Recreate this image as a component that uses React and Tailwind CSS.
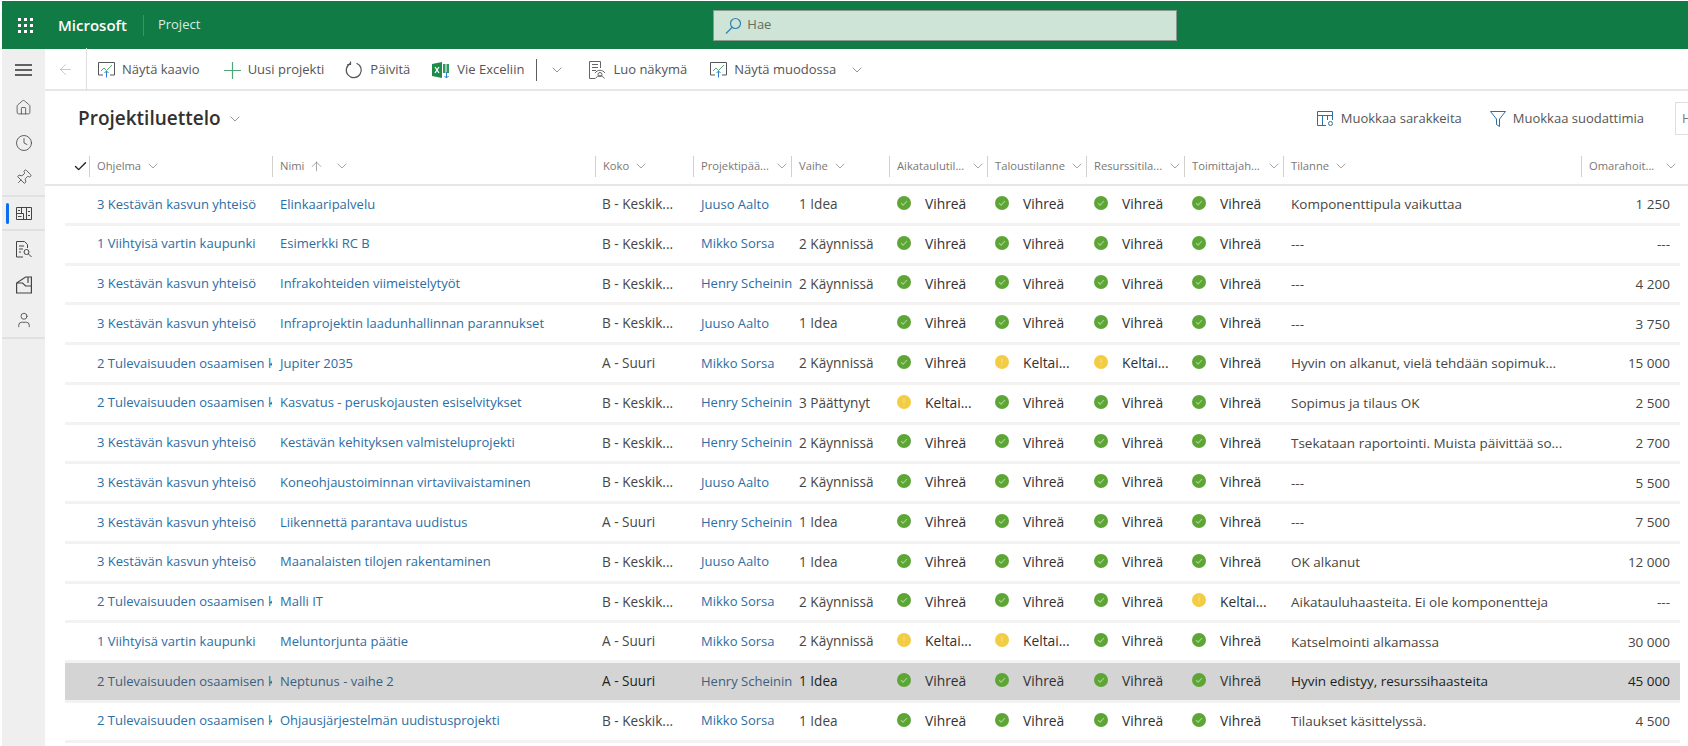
import React from "react";
import { ArrowLeft, ArrowUp, Check, ChevronDown, Clock, Home, Pin, User } from "lucide-react";

const font = "font-['Open_Sans','Noto_Sans',sans-serif]";
const cols = "grid grid-cols-[24px_183px_323px_98px_98px_98px_98px_99px_98px_99px_298px_99px]";

const K3 = "3 Kestävän kasvun yhteisö";
const V1 = "1 Viihtyisä vartin kaupunki";
const T2 = "2 Tulevaisuuden osaamisen k";
const BK = "B - Keskik...";
const AS = "A - Suuri";

const rows = [
  [K3, "Elinkaaripalvelu", BK, "Juuso Aalto", "1 Idea", "GGGG", "Komponenttipula vaikuttaa", "1 250"],
  [V1, "Esimerkki RC B", BK, "Mikko Sorsa", "2 Käynnissä", "GGGG", "---", "---"],
  [K3, "Infrakohteiden viimeistelytyöt", BK, "Henry Scheinin", "2 Käynnissä", "GGGG", "---", "4 200"],
  [K3, "Infraprojektin laadunhallinnan parannukset", BK, "Juuso Aalto", "1 Idea", "GGGG", "---", "3 750"],
  [T2, "Jupiter 2035", AS, "Mikko Sorsa", "2 Käynnissä", "GYYG", "Hyvin on alkanut, vielä tehdään sopimuk...", "15 000"],
  [T2, "Kasvatus - peruskojausten esiselvitykset", BK, "Henry Scheinin", "3 Päättynyt", "YGGG", "Sopimus ja tilaus OK", "2 500"],
  [K3, "Kestävän kehityksen valmisteluprojekti", BK, "Henry Scheinin", "2 Käynnissä", "GGGG", "Tsekataan raportointi. Muista päivittää so...", "2 700"],
  [K3, "Koneohjaustoiminnan virtaviivaistaminen", BK, "Juuso Aalto", "2 Käynnissä", "GGGG", "---", "5 500"],
  [K3, "Liikennettä parantava uudistus", AS, "Henry Scheinin", "1 Idea", "GGGG", "---", "7 500"],
  [K3, "Maanalaisten tilojen rakentaminen", BK, "Juuso Aalto", "1 Idea", "GGGG", "OK alkanut", "12 000"],
  [T2, "Malli IT", BK, "Mikko Sorsa", "2 Käynnissä", "GGGY", "Aikatauluhaasteita. Ei ole komponentteja", "---"],
  [V1, "Meluntorjunta päätie", AS, "Mikko Sorsa", "2 Käynnissä", "YYGG", "Katselmointi alkamassa", "30 000"],
  [T2, "Neptunus - vaihe 2", AS, "Henry Scheinin", "1 Idea", "GGGG", "Hyvin edistyy, resurssihaasteita", "45 000"],
  [T2, "Ohjausjärjestelmän uudistusprojekti", BK, "Mikko Sorsa", "1 Idea", "GGGG", "Tilaukset käsittelyssä.", "4 500"],
];

// --- drawn icons ---
function Waffle() {
  const dots = [];
  for (let y = 0; y < 3; y++) for (let x = 0; x < 3; x++) dots.push(<rect key={x + "-" + y} x={x * 6} y={y * 6} width="3" height="3" />);
  return <svg width="15" height="15" viewBox="0 0 15 15" fill="#fff">{dots}</svg>;
}

function Hamburger() {
  return (
    <svg width="17" height="12" viewBox="0 0 17 12" stroke="#333" strokeWidth="1.300">
      <path d="M0 1h17M0 6h17M0 11h17" />
    </svg>
  );
}

function SearchIcon() {
  return (
    <svg width="17" height="17" viewBox="0 0 17 17" fill="none" stroke="#2f82b8" strokeWidth="1.200">
      <circle cx="10.500" cy="6.500" r="5" />
      <path d="M7 10.500L1 16.500" />
    </svg>
  );
}

function ChartIcon() {
  return (
    <svg width="17" height="16" viewBox="0 0 17 16" fill="none" strokeWidth="1">
      <path d="M5 13H.5V.500h16V13H12" stroke="#555" />
      <path d="M3 9l3-3 2.500 2.500L14 3" stroke="#55ab74" />
      <path d="M8.500 15.500V9M6.500 11l2-2 2 2" stroke="#2b7cd3" />
    </svg>
  );
}

function PlusIcon() {
  return (
    <svg width="17" height="17" viewBox="0 0 17 17" stroke="#4fa873" strokeWidth="1.200">
      <path d="M8.500 0v17M0 8.500h17" />
    </svg>
  );
}

function RefreshIcon() {
  return (
    <svg width="18" height="18" viewBox="0 0 18 18" fill="none" stroke="#555" strokeWidth="1.200">
      <path d="M11.500 2.200a7.500 7.500 0 1 1-6.300.4" />
      <path d="M5.500.500v3h-3.200" />
    </svg>
  );
}

function ExcelIcon() {
  return (
    <svg width="18" height="17" viewBox="0 0 18 17">
      <path d="M0 2l10-2v16L0 14z" fill="#1f8a4c" />
      <path d="M3 5l4 6M7 5l-4 6" stroke="#fff" strokeWidth="1.300" />
      <path d="M11 2h2.500v9H11zM14.500 2H17v9h-2.500z" fill="#2f9a5c" />
      <path d="M14.500 10v6M12.500 14l2 2 2-2" stroke="#2b7cd3" fill="none" />
    </svg>
  );
}

function ViewIcon() {
  return (
    <svg width="17" height="18" viewBox="0 0 17 18" fill="none" stroke="#666">
      <path d="M6 17.500H.5V.500h11V7M3 3.500h6M3 6.500h6M3 9.500h4" />
      <circle cx="11" cy="13.500" r="2" />
      <path d="M6.500 17.500a5 5 0 0 1 9 0M6 12a6 6 0 0 1 10 0" />
    </svg>
  );
}

function ColumnsIcon() {
  return (
    <svg width="17" height="16" viewBox="0 0 17 16" fill="none" stroke="#2f6ea5">
      <path d="M9 14.500H.5V.500h15V9M.5 4.500h15M5.500 4.500v10M10.500 4.500V9" />
      <circle cx="13.500" cy="12.500" r="2" />
    </svg>
  );
}

function FunnelIcon() {
  return (
    <svg width="16" height="16" viewBox="0 0 16 16" fill="none" stroke="#2f6ea5">
      <path d="M.5.500h15L9.500 8v7.500l-3-2V8z" />
    </svg>
  );
}

function ListIcon() {
  return (
    <svg width="16" height="13" viewBox="0 0 16 13" fill="none" stroke="#444">
      <path d="M.5.500h15v12H.500zM.5 6.500h7M5.500.500v6M10.500.500v12M7.500 6.500v6M2 3.500h2M2 9.500h3.500M12 4.500h2M12 8.500h2" />
    </svg>
  );
}

function ReportIcon() {
  return (
    <svg width="17" height="18" viewBox="0 0 17 18" fill="none" stroke="#444">
      <path d="M8 17H1.500V1.500h8l3 3V8M4 6h5M4 9h4M4 12h2" />
      <circle cx="11.500" cy="12" r="2.500" />
      <path d="M13.500 14l3 3" />
    </svg>
  );
}

function BookIcon() {
  return (
    <svg width="16" height="18" viewBox="0 0 16 18" fill="none" stroke="#444" strokeWidth="1.200">
      <path d="M.6 17V7l9-6h5.800v16zM.6 7h6l3 3h5.800M12 1v6" />
    </svg>
  );
}

function StatusDot({ kind }) {
  if (kind === "G") {
    return (
      <svg width="14" height="14" viewBox="0 0 14 14" className="shrink-0 -mt-[3px]">
        <circle cx="7" cy="7" r="7" fill="#5da636" />
        <path d="M4 7.200l2.100 2L10 5" fill="none" stroke="#a8d08f" strokeWidth="1.100" />
      </svg>
    );
  }
  return (
    <svg width="14" height="14" viewBox="0 0 14 14" className="shrink-0 -mt-[3px]">
      <circle cx="7" cy="7" r="7" fill="#f2cd43" />
      <path d="M7 3.500v4.500M7 9.500v1" stroke="#f8e08a" strokeWidth="1" />
    </svg>
  );
}

// --- bits of the page ---
function ToolButton({ icon, label, className }) {
  return (
    <div className={"flex items-center gap-[7px] " + className}>
      {icon}
      <span>{label}</span>
    </div>
  );
}

function HeaderCell({ label, sort, first }) {
  return (
    <div className="flex items-center h-[21px] border-l border-[#d2d0ce] pl-[7px] pr-[1px]">
      <span className="text-[11.2px] text-[#797775] whitespace-nowrap">{label}</span>
      {sort && <ArrowUp size={15} strokeWidth={1} className="text-[#797775] ml-[5px] mr-[6px]" />}
      <ChevronDown size={16} strokeWidth={1} className={"text-[#797775] " + (first ? "ml-1" : "ml-auto")} />
    </div>
  );
}

function StatusCell({ kind }) {
  return (
    <div className="flex items-center pl-2">
      <StatusDot kind={kind} />
      <span className="ml-[14px] text-[13.8px] text-[#323130]">{kind === "G" ? "Vihreä" : "Keltai..."}</span>
    </div>
  );
}

function Row({ row, selected }) {
  const link = selected ? "text-[#3b5f80]" : "text-[#2c6da3]";
  const plain = selected ? "text-[#201f1e]" : "text-[#484644]";
  return (
    <div className={cols + " h-[39.75px] items-stretch border-b-[3px] border-[#f3f2f1] text-[13px] " + (selected ? "bg-[#d4d4d4]" : "")}>
      <div />
      <div className={"flex items-center pl-2 overflow-hidden whitespace-nowrap " + link}>{row[0]}</div>
      <div className={"flex items-center pl-2 whitespace-nowrap " + link}>{row[1]}</div>
      <div className={"flex items-center pl-[7px] whitespace-nowrap text-[13.6px] " + plain}>{row[2]}</div>
      <div className={"flex items-center pl-2 whitespace-nowrap " + link}>{row[3]}</div>
      <div className={"flex items-center pl-2 whitespace-nowrap text-[13.6px] " + plain}>{row[4]}</div>
      {row[5].split("").map((kind, i) => <StatusCell key={i} kind={kind} />)}
      <div className={"flex items-center pl-2 whitespace-nowrap text-[13.5px] " + plain}>{row[6]}</div>
      <div className={"flex items-center justify-end pr-[10px] whitespace-nowrap text-[13.5px] " + plain}>{row[7]}</div>
    </div>
  );
}

export default function App() {
  return (
    <div className={"h-[746px] w-[1688px] overflow-hidden bg-white pl-[2px] pt-[1px] flex flex-col " + font}>
      {/* top bar */}
      <div className="h-[48px] shrink-0 bg-[#117b45] flex items-center text-white">
        <div className="w-[15px] ml-[16px] flex"><Waffle /></div>
        <span className="ml-[25px] text-[15px] font-semibold">Microsoft</span>
        <div className="ml-4 h-[21px] border-l border-[#3b9468]" />
        <span className="ml-[14px] text-[13px] text-[#d8ece1]">Project</span>
        <div className="ml-[513px] w-[464px] h-[31px] bg-[#cde4d6] border border-[#8a9a90] flex items-center pl-[11px] text-[13px] text-[#5f6f66]">
          <SearchIcon />
          <span className="ml-[5px]">Hae</span>
        </div>
      </div>

      <div className="flex-1 flex min-h-0">
        {/* left rail */}
        <div className="w-[43px] shrink-0 bg-[#efefef] flex flex-col text-[#444]">
          <div className="h-[41px] flex items-center justify-center"><Hamburger /></div>
          <div className="h-[35px] flex items-center justify-center"><Home size={17} strokeWidth={1.1} /></div>
          <div className="h-[35px] flex items-center justify-center"><Clock size={18} strokeWidth={1.1} /></div>
          <div className="h-[35px] flex items-center justify-center"><Pin size={17} strokeWidth={1.1} className="rotate-45" /></div>
          <div className="h-[36px] border-y-2 border-[#e1e1e1] flex items-center justify-center relative">
            <div className="absolute left-[4px] top-[6px] w-[3px] h-[21px] rounded-sm bg-[#0f6cf0]" />
            <ListIcon />
          </div>
          <div className="h-[36px] flex items-center justify-center"><ReportIcon /></div>
          <div className="h-[35px] flex items-center justify-center"><BookIcon /></div>
          <div className="h-[35px] flex items-center justify-center"><User size={18} strokeWidth={1.1} /></div>
          <div className="border-t-2 border-[#e1e1e1]" />
        </div>

        <div className="flex-1 min-w-0 flex flex-col">
          {/* command bar */}
          <div className="h-[42px] shrink-0 border-b-2 border-[#e6e6e6] pt-[2px] flex items-center text-[13px] text-[#555]">
            <div className="w-[42px] -mt-[2px] h-[42px] border-r border-[#dedede] flex items-center justify-center">
              <ArrowLeft size={17} strokeWidth={1} className="text-[#b5b5b5]" />
            </div>
            <ToolButton className="ml-[11px]" icon={<ChartIcon />} label="Näytä kaavio" />
            <ToolButton className="ml-[24px]" icon={<PlusIcon />} label="Uusi projekti" />
            <ToolButton className="ml-[21px]" icon={<RefreshIcon />} label="Päivitä" />
            <ToolButton className="ml-[22px]" icon={<ExcelIcon />} label="Vie Exceliin" />
            <div className="ml-[12px] h-[22px] border-l border-[#605e5c]" />
            <ChevronDown size={16} strokeWidth={1} className="ml-[12px] text-[#605e5c]" />
            <ToolButton className="ml-[24px]" icon={<ViewIcon />} label="Luo näkymä" />
            <ToolButton className="ml-[23px]" icon={<ChartIcon />} label="Näytä muodossa" />
            <ChevronDown size={16} strokeWidth={1} className="ml-[13px] text-[#605e5c]" />
          </div>

          {/* title row */}
          <div className="h-[55px] shrink-0 flex items-center">
            <h1 className="ml-[33px] text-[19px] font-semibold text-[#323130]">Projektiluettelo</h1>
            <ChevronDown size={16} strokeWidth={1} className="ml-[6px] text-[#605e5c]" />
            <div className="ml-auto flex items-center text-[13px] text-[#555]">
              <ToolButton icon={<ColumnsIcon />} label="Muokkaa sarakkeita" />
              <ToolButton className="ml-[28px]" icon={<FunnelIcon />} label="Muokkaa suodattimia" />
              <div className="ml-[31px] w-[13px] h-[33px] border border-r-0 border-[#e1dfdd] pl-[6px] text-[#797775] leading-[31px] overflow-hidden">H</div>
            </div>
          </div>

          {/* list */}
          <div className="ml-[20px] w-[1615px]">
            <div className={cols + " h-[38px] pt-[2px] items-center"}>
              <Check size={15} strokeWidth={2.2} className="text-[#201f1e] ml-[8px]" />
              <HeaderCell first label="Ohjelma" />
              <HeaderCell first sort label="Nimi" />
              <HeaderCell first label="Koko" />
              <HeaderCell label="Projektipää..." />
              <HeaderCell first label="Vaihe" />
              <HeaderCell label="Aikataulutil..." />
              <HeaderCell label="Taloustilanne" />
              <HeaderCell label="Resurssitila..." />
              <HeaderCell label="Toimittajah..." />
              <HeaderCell first label="Tilanne" />
              <HeaderCell label="Omarahoit..." />
            </div>
            <div className="border-t-2 border-[#e6e6e6] -ml-[20px] w-[1643px]" />
            {rows.map((row, i) => <Row key={i} row={row} selected={i === 12} />)}
          </div>
        </div>
      </div>
    </div>
  );
}
